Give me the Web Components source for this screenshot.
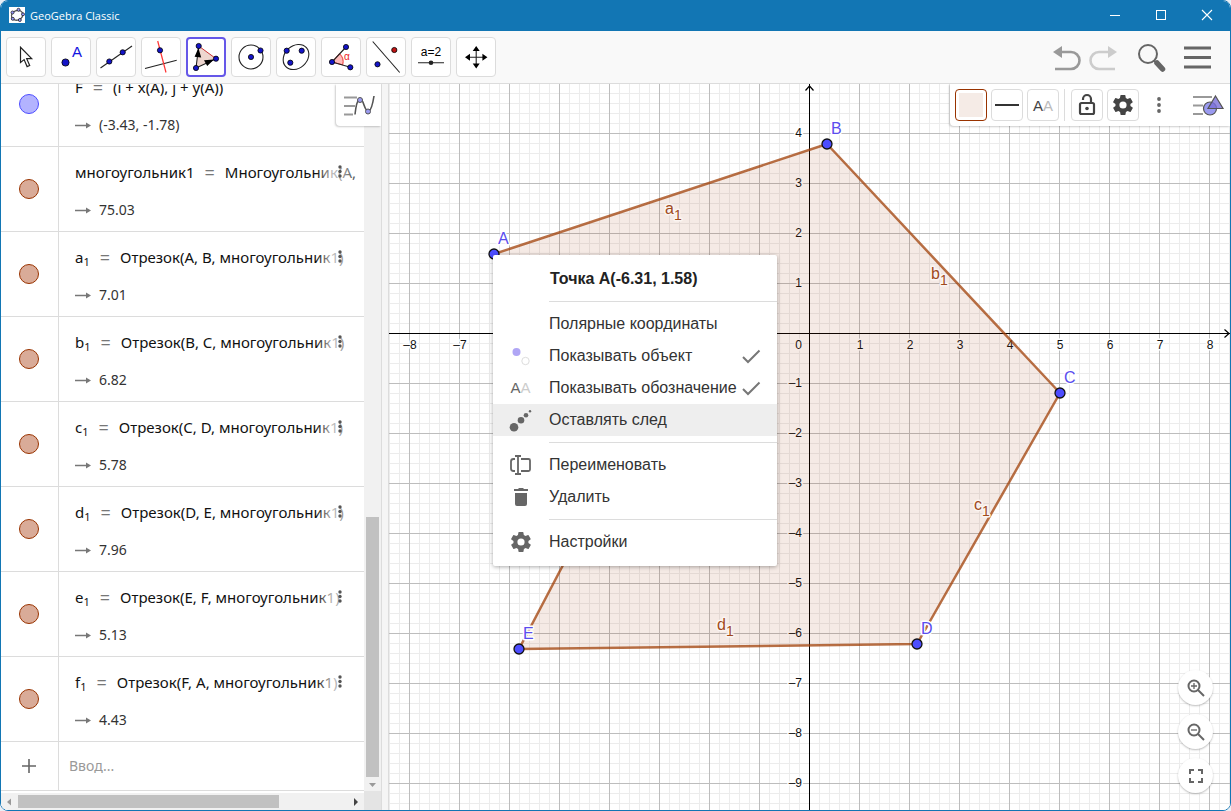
<!DOCTYPE html>
<html lang="ru">
<head>
<meta charset="utf-8">
<title>GeoGebra Classic</title>
<style>
html,body{margin:0;height:100%;background:#e9eef5;overflow:hidden}
</style>
</head>
<body>
<gg-app></gg-app>
<script>
const define = (name, html, setup) => {
  const t = document.createElement('template');
  t.innerHTML = '<style>*{box-sizing:border-box}button{font:inherit;color:inherit;border:0;background:none;padding:0;margin:0}svg{display:block}</style>' + html;
  customElements.define(name, class extends HTMLElement {
    constructor() {
      super();
      this.attachShadow({mode: 'open'}).append(t.content.cloneNode(true));
    }
    connectedCallback() { if (setup) setup(this, this.shadowRoot); }
  });
};

const GEAR = 'M19.4 13a7.500 7.500 0 0 0 0-2l2.100-1.600a.5.5 0 0 0 .1-.7l-2-3.400a.5.5 0 0 0-.6-.2l-2.500 1a7.300 7.300 0 0 0-1.700-1l-.4-2.600a.5.5 0 0 0-.5-.5h-4a.5.5 0 0 0-.5.5l-.4 2.600a7.600 7.600 0 0 0-1.700 1l-2.500-1a.5.5 0 0 0-.6.2l-2 3.400a.5.5 0 0 0 .1.700L4.500 11a7.900 7.900 0 0 0 0 2l-2.100 1.600a.5.5 0 0 0-.1.700l2 3.400c.1.2.4.3.6.2l2.500-1a7.300 7.300 0 0 0 1.700 1l.4 2.600c0 .3.2.5.5.5h4c.3 0 .5-.2.5-.5l.4-2.600a7.600 7.600 0 0 0 1.700-1l2.500 1c.2.100.5 0 .6-.2l2-3.400a.5.5 0 0 0-.1-.7zM12 15.600a3.600 3.600 0 1 1 0-7.200 3.600 3.600 0 0 1 0 7.200z';

/* Window title bar */
define('gg-titlebar', `
<style>
:host{display:flex;align-items:center;box-sizing:border-box;height:30px;padding:0 0 2px 8px;background:#1276b4;color:#fff;font:11px "Open Sans",sans-serif}
.logo{width:16px;height:16px;background:#fff;margin-right:5px}
.name{flex:1}
button{width:46px;height:28px;display:flex;align-items:center;justify-content:center}
</style>
<svg class="logo" viewBox="0 0 16 16"><ellipse cx="8" cy="8.300" rx="5.800" ry="4.800" fill="none" stroke="#555" stroke-width="1.300" transform="rotate(-20 8 8)"/><g fill="#99f" stroke="#222" stroke-width=".8"><circle cx="9.500" cy="2.800" r="1.500"/><circle cx="3.500" cy="5.500" r="1.500"/><circle cx="3.800" cy="11.800" r="1.500"/><circle cx="10.800" cy="13" r="1.500"/><circle cx="14" cy="7.300" r="1.500"/></g></svg>
<span class="name">GeoGebra Classic</span>
<button aria-label="Свернуть"><svg width="12" height="12"><path d="M1 6.500h10" stroke="#fff"/></svg></button>
<button aria-label="Развернуть"><svg width="12" height="12"><rect x="1.500" y="1.500" width="9" height="9" fill="none" stroke="#fff"/></svg></button>
<button aria-label="Закрыть"><svg width="12" height="12"><path d="M1 1l10 10M11 1L1 11" stroke="#fff" stroke-width="1.100"/></svg></button>
`);

/* One tool button */
define('gg-tool', `
<style>
:host{display:block}
button{display:block;width:40px;height:40px;background:#fff;border:1px solid #dcdcdc;border-radius:4px}
:host([active]) button{border:2px solid #6557e8}
svg{width:38px;height:38px}
:host([active]) svg{margin:-1px}
</style>
<button><svg viewBox="0 0 38 38"></svg></button>
`, (host, root) => {
  const d = (x, y, r = 2.6) => `<circle cx="${x}" cy="${y}" r="${r}" fill="#1414c8" stroke="#000" stroke-width=".8"/>`;
  const l = 'stroke="#222" stroke-width="1.100" fill="none"';
  const icons = {
    move: `<path d="M13.500 9.300v15.200l3.600-2.900 3 7 2.600-1.100-3-6.800h5z" fill="#fff" stroke="#222" stroke-width="1.200"/>`,
    point: d(13.5, 24.5, 3.6) + `<text x="20" y="19" font-family="Liberation Sans,sans-serif" font-size="15" fill="#1414e0">A</text>`,
    line: `<path d="M3.500 30L35 8" ${l}/>` + d(12.3, 23.5) + d(25.7, 14.3),
    perp: `<path d="M3 30.500L34.700 22.300" ${l}/><path d="M15.700 3L24 34.500" stroke="#f33" stroke-width="1.200"/>` + d(18, 12.3),
    poly: `<path d="M11.700 8L29 20.700 9 30z" fill="#eed6cf"/><path d="M11.700 8L29 20.700" stroke="#c33"/><path d="M9 30L11.700 8M9 30L29 20.700" ${l}/><path d="M11.400 10l2.800 9.500-6.600-.8zM27 21.500l-10 .8 3.200 5.800z"/>` + d(11.7, 8) + d(29, 20.7) + d(9, 30),
    circle: `<circle cx="19" cy="19" r="12" ${l}/>` + d(19, 19) + d(28.5, 12.5),
    conic: `<ellipse cx="19" cy="19" rx="14" ry="11.200" transform="rotate(-42 19 19)" ${l}/>` + d(9.7, 12.7) + d(24.7, 12.7) + d(13.3, 24.7),
    angle: `<path d="M10 24L17.500 15.700A11 11 0 0 1 20.700 26.800z" fill="#fbb" stroke="#e33"/><path d="M24 9L10 24 28.300 29.300" ${l}/><text x="22" y="22" font-family="Liberation Sans,sans-serif" font-size="10" fill="#e22">α</text>` + d(24, 9) + d(10, 24) + d(28.3, 29.3),
    mirror: `<path d="M5.700 3.500L32.700 34.500" ${l}/>` + d(10.5, 26.3) + `<circle cx="27.300" cy="12" r="2.600" fill="#c01414" stroke="#000" stroke-width=".8"/>`,
    slider: `<text x="19" y="18" text-anchor="middle" font-family="Liberation Sans,sans-serif" font-size="12" fill="#000">a=2</text><path d="M6 24.700h26" ${l}/><circle cx="19" cy="24.700" r="2.300" fill="#222"/>`,
    pan: `<path d="M19.200 12v14M12 19.200h14" ${l}/><path d="M19.200 8l3.500 5h-7zM19.200 30.400l3.500-5h-7zM8 19.200l5-3.500v7zM30.400 19.200l-5-3.500v7z"/>`
  };
  root.querySelector('svg').innerHTML = icons[host.getAttribute('icon')];
  root.querySelector('button').setAttribute('aria-label', host.title);
});

/* Main toolbar */
define('gg-toolbar', `
<style>
:host{display:flex;align-items:center;height:53px;padding:0 16px 0 5px;background:#f9f9f9;border-bottom:1px solid #dcdcdc}
.tools{display:flex;gap:5px;flex:1}
.right{display:flex;align-items:center}
.right button{display:flex;justify-content:center;align-items:center}
</style>
<div class="tools">
<gg-tool icon="move" title="Перемещать"></gg-tool><gg-tool icon="point" title="Точка"></gg-tool><gg-tool icon="line" title="Прямая"></gg-tool><gg-tool icon="perp" title="Перпендикулярная прямая"></gg-tool><gg-tool icon="poly" title="Многоугольник" active></gg-tool><gg-tool icon="circle" title="Окружность"></gg-tool><gg-tool icon="conic" title="Эллипс"></gg-tool><gg-tool icon="angle" title="Угол"></gg-tool><gg-tool icon="mirror" title="Отражение"></gg-tool><gg-tool icon="slider" title="Ползунок"></gg-tool><gg-tool icon="pan" title="Переместить чертёж"></gg-tool>
</div>
<div class="right">
<button aria-label="Отменить"><svg width="38" height="32"><path d="M11 11h13a8.500 8.500 0 0 1 0 17H8" fill="none" stroke="#999" stroke-width="2.600"/><path d="M6 11l9-6v12z" fill="#999"/></svg></button>
<button aria-label="Повторить"><svg width="38" height="32"><path d="M27 11H14a8.500 8.500 0 0 0 0 17h16" fill="none" stroke="#ccc" stroke-width="2.600"/><path d="M32 11l-9-6v12z" fill="#ccc"/></svg></button>
<button aria-label="Поиск"><svg width="57" height="32"><circle cx="25" cy="13" r="9" fill="none" stroke="#666" stroke-width="2"/><path d="M31 19.500l3 3" stroke="#666" stroke-width="2"/><path d="M34 22l5.500 6" stroke="#666" stroke-width="5.500" stroke-linecap="round"/></svg></button>
<button aria-label="Меню"><svg width="34" height="32"><path d="M4 7h27M4 16.500h27M4 26h27" stroke="#666" stroke-width="2.800"/></svg></button>
</div>
`);

/* One object of the algebra list */
define('gg-row', `
<style>
:host{display:flex;flex:none;height:85px;border-bottom:1px solid #dcdcdc;font-family:"Noto Sans","Open Sans",sans-serif;color:#111;--dot:#d9ab98;--ring:#993300}
:host([kind=point]){--dot:#b3b3ff;--ring:#4d4dff}
.mark{flex:none;width:58px;padding-right:2px;border-right:1px solid #dcdcdc;display:flex;justify-content:center;align-items:center}
.mark button{width:20px;height:20px;border-radius:50%;background:var(--dot);border:1px solid var(--ring)}
.body{position:relative;flex:1;min-width:0;overflow:hidden;padding:13px 0 0 16px;white-space:nowrap}
.eq{font-size:15px;line-height:24px;display:flex;gap:10px}
.val{font-size:14px;line-height:24px;margin-top:14px;display:flex;align-items:center;gap:8px;color:#333}
.fade{position:absolute;top:0;right:0;width:48px;height:50px;background:linear-gradient(90deg,#fff0,#fffb 35%,#fff8 60%,#fff0)}
.more{position:absolute;top:17px;right:20px;width:8px;height:16px}
:host([kind=point]) .fade,:host([kind=point]) .more{display:none}
::slotted(sub){font-size:11px;line-height:0;vertical-align:-3px}
.eqs{color:#777;font-size:18px}
</style>
<div class="mark"><button aria-label="Показывать объект"></button></div>
<div class="body">
<div class="eq"><span><slot name="name"></slot><slot name="index"></slot></span><span class="eqs">=</span><span><slot></slot></span></div>
<div class="val"><svg width="16" height="10"><path d="M0 5.500h13" stroke="#777" stroke-width="1.500"/><path d="M16 5.500l-5-3v6z" fill="#777"/></svg><slot name="value"></slot></div>
<div class="fade"></div>
<button class="more" aria-label="Ещё"><svg width="8" height="16" fill="#555"><circle cx="4" cy="3" r="1.700"/><circle cx="4" cy="7.500" r="1.700"/><circle cx="4" cy="12" r="1.700"/></svg></button>
</div>
`);

/* Algebra panel with its scroll bars */
define('gg-algebra', `
<style>
:host{position:relative;display:grid;grid-template:minmax(0,1fr) 19px / minmax(0,1fr) 17px;flex:none;width:381px;background:#fff;border-right:1px solid #dcdcdc;font-family:"Noto Sans",sans-serif}
.list{display:flex;flex-direction:column;justify-content:flex-end;overflow:hidden;min-height:0}
.new{display:flex;flex:none;height:49px;border-bottom:1px solid #dcdcdc}
.plus{flex:none;width:58px;padding-right:2px;border-right:1px solid #dcdcdc;display:flex;align-items:center;justify-content:center}
input{flex:1;min-width:0;border:0;outline:0;background:none;padding:0 10px 2px;font:14px "Noto Sans",sans-serif}
input::placeholder{color:#999}
.v{background:#f1f1f1;display:flex;flex-direction:column;align-items:center;justify-content:flex-end}
.v .thumb{width:13px;height:260px;background:#c1c1c1}
.h{background:#f1f1f1;display:flex;align-items:center;border-top:2px solid #fff}
.h .thumb{width:261px;height:13px;background:#c1c1c1}
.h .gap{flex:1}
.corner{background:#e4e4e4}
.toggle{position:absolute;top:0;right:0;width:45px;height:42px;background:#fff;border-bottom-left-radius:4px;box-shadow:-1px 1px 2px #0003;display:flex;align-items:center;justify-content:center}
</style>
<div class="list">
<gg-row kind="point"><span slot="name">F</span>(i + x(A), j + y(A))<span slot="value">(-3.43, -1.78)</span></gg-row>
<gg-row><span slot="name">многоугольник1</span>Многоугольник(A,<span slot="value">75.03</span></gg-row>
<gg-row><span slot="name">a</span><sub slot="index">1</sub>Отрезок(A, B, многоугольник1)<span slot="value">7.01</span></gg-row>
<gg-row><span slot="name">b</span><sub slot="index">1</sub>Отрезок(B, C, многоугольник1)<span slot="value">6.82</span></gg-row>
<gg-row><span slot="name">c</span><sub slot="index">1</sub>Отрезок(C, D, многоугольник1)<span slot="value">5.78</span></gg-row>
<gg-row><span slot="name">d</span><sub slot="index">1</sub>Отрезок(D, E, многоугольник1)<span slot="value">7.96</span></gg-row>
<gg-row><span slot="name">e</span><sub slot="index">1</sub>Отрезок(E, F, многоугольник1)<span slot="value">5.13</span></gg-row>
<gg-row><span slot="name">f</span><sub slot="index">1</sub>Отрезок(F, A, многоугольник1)<span slot="value">4.43</span></gg-row>
<div class="new"><button class="plus" aria-label="Добавить"><svg width="14" height="14"><path d="M7 0v14M0 7h14" stroke="#666" stroke-width="1.600"/></svg></button><input aria-label="Ввод" placeholder="Ввод..."></div>
</div>
<div class="v"><div class="thumb"></div><svg width="17" height="14"><path d="M5 6h7l-3.500 4z" fill="#999"/></svg></div>
<div class="h"><svg width="17" height="14"><path d="M10 3.500v7l-4-3.500z" fill="#999"/></svg><div class="thumb"></div><div class="gap"></div><svg width="17" height="14"><path d="M7 3v8l4-4z" fill="#444"/></svg></div>
<div class="corner"></div>
<button class="toggle" aria-label="Настройки панели"><svg width="32" height="24"><path d="M1 4.500h13M1 13h11M1 21.500h9" stroke="#999" stroke-width="2"/><path d="M12 21.500C14 3 18 3 21 12s7 10 10-9" fill="none" stroke="#555" stroke-width="1.600"/><g fill="#9a9af0" stroke="#555"><circle cx="17" cy="7" r="2.500"/><circle cx="25" cy="18.500" r="2.500"/></g></svg></button>
`);

/* Coordinate plane with the polygon */
define('gg-plane', `
<style>
:host{display:block;height:100%}
svg{width:100%;height:100%;font-family:"Liberation Sans",sans-serif}
text{paint-order:stroke;stroke:#fff;stroke-width:3px;stroke-linejoin:round}
.axis{font-size:12px;fill:#111}
.pt{font-size:16px;fill:#5a4dee}
.seg{font-size:16px;fill:#a04a1c;stroke:#fbf5f2}
.sub{font-size:14px}
</style>
<svg role="img" aria-label="Полотно">
<defs>
<pattern id="minor" x="420" y="249" width="10" height="10" patternUnits="userSpaceOnUse"><path d="M0 0h1v10h-1zM0 0h10v1h-10z" fill="#ececec"/></pattern>
<pattern id="major" x="420" y="249" width="50" height="50" patternUnits="userSpaceOnUse"><path d="M0 0h1v50h-1zM0 0h50v1h-50z" fill="#bdbdbd"/></pattern>
</defs>
<rect width="100%" height="100%" fill="#fff"/>
<rect width="100%" height="100%" fill="url(#minor)"/>
<rect width="100%" height="100%" fill="url(#major)"/>
<rect y="249" width="100%" height="1"/>
<rect x="420" width="1" height="100%"/>
<path d="M416.500 6.500l4-4.500 4 4.500" fill="none" stroke="#000" stroke-width="1.200"/>
<svg x="100%" y="249" style="overflow:visible;width:1px;height:1px"><path d="M-5.500-3.500l4.500 4-4.500 4" fill="none" stroke="#000" stroke-width="1.200"/></svg>
<g class="axis" id="labels"></g>
<path d="M105 170L438 60 671 309 528 560 130 565 249 338z" fill="#993300" fill-opacity=".1" stroke="#a04008" stroke-opacity=".75" stroke-width="2.500" stroke-linejoin="round"/>
<g id="objects"></g>
</svg>
`, (host, root) => {
  let s = '';
  for (const n of [-8, -7, 1, 2, 3, 4, 5, 6, 7, 8]) s += `<text x="${421 + n * 50}" y="265" text-anchor="middle">${n < 0 ? '–' : ''}${Math.abs(n)}</text>`;
  for (let n = 4; n >= -9; n--) if (n) s += `<text x="413" y="${253 - n * 50}" text-anchor="end">${n < 0 ? '–' : ''}${Math.abs(n)}</text>`;
  s += '<text x="413" y="265" text-anchor="end">0</text>';
  root.getElementById('labels').innerHTML = s;
  const pts = [['A', 105, 170], ['B', 438, 60], ['C', 671, 309], ['D', 528, 560], ['E', 130, 565]];
  const segs = [['a', 276, 130], ['b', 542, 195], ['c', 585, 426], ['d', 328, 546]];
  root.getElementById('objects').innerHTML =
    segs.map(([n, x, y]) => `<text class="seg" x="${x}" y="${y}">${n}<tspan class="sub" dy="6">1</tspan></text>`).join('') +
    pts.map(([n, x, y]) => `<text class="pt" x="${x + 4}" y="${y - 10}">${n}</text><circle cx="${x}" cy="${y}" r="5" fill="#4d4dff" stroke="#111" stroke-width="1.300"/>`).join('');
});

/* Style bar of the graphics view */
define('gg-stylebar', `
<style>
:host{display:flex;align-items:center;gap:4px;height:42px;padding:0 4px 0 5px;background:#fff;border-bottom-left-radius:4px;box-shadow:-1px 1px 2px #0003}
.b{width:32px;height:32px;border:1px solid #dcdcdc;border-radius:4px;display:flex;align-items:center;justify-content:center}
.fill{border-color:#993300}
.fill span{width:24px;height:24px;background:#f5ebe6}
.aa{font:15px "Liberation Sans",sans-serif;color:#444}
.aa i{font-style:normal;color:#bbb}
.sep{width:1px;height:32px;margin:0 2px 0 1px;background:#dcdcdc}
.more{width:32px;display:flex;justify-content:center}
.last{margin-left:13px}
</style>
<button class="b fill" aria-label="Цвет"><span></span></button>
<button class="b" aria-label="Линия"><svg width="24" height="4"><path d="M0 2h24" stroke="#333" stroke-width="2"/></svg></button>
<button class="b aa" aria-label="Обозначение">A<i>A</i></button>
<span class="sep"></span>
<button class="b" aria-label="Закрепить"><svg width="24" height="24" fill="none" stroke="#444" stroke-width="2.200"><rect x="5" y="10" width="14" height="11" rx="1.500"/><path d="M8 7V6a4 4 0 0 1 8 0v4"/><circle cx="12" cy="15.500" r="1.800" fill="#444" stroke="none"/></svg></button>
<button class="b" aria-label="Настройки"><svg width="24" height="24"><path d="${GEAR}" fill="#444"/></svg></button>
<button class="more" aria-label="Ещё"><svg width="6" height="18" fill="#666"><circle cx="3" cy="3" r="1.900"/><circle cx="3" cy="9" r="1.900"/><circle cx="3" cy="15" r="1.900"/></svg></button>
<button class="last" aria-label="Панель стиля"><svg width="34" height="24"><path d="M1 4h19M1 12.500h10M1 21h10" stroke="#999" stroke-width="2"/><circle cx="18" cy="15.500" r="6.500" fill="#9a9af0" stroke="#555" stroke-width="1.200"/><path d="M23.500 3l7.500 12.500H16z" fill="#7a6fd8" fill-opacity=".8" stroke="#555" stroke-width="1.200"/></svg></button>
`);

/* Context menu entry */
define('gg-menuitem', `
<style>
:host{display:block}
button{display:flex;align-items:center;width:100%;height:32px;padding-left:16px;text-align:left;font:16px "Liberation Sans",sans-serif;color:#333}
:host([hover]) button{background:#eee}
.ic{flex:none;width:24px;height:24px;margin-right:16px}
.check{display:none;flex:none;margin-left:auto;margin-right:16px}
:host([checked]) .check{display:block}
span{white-space:nowrap}
</style>
<button role="menuitem"><svg class="ic" viewBox="0 0 24 24" fill="#666"></svg><span><slot></slot></span><svg class="check" width="20" height="20"><path d="M2 11l5 5L18.500 4.500" fill="none" stroke="#777" stroke-width="2"/></svg></button>
`, (host, root) => {
  const icons = {
    show: '<circle cx="7.500" cy="8" r="4" fill="#b0a6f5"/><circle cx="16.500" cy="17" r="3.700" fill="#fff" stroke="#ddd"/>',
    label: '<text x="1.500" y="17" font-family="Liberation Sans,sans-serif" font-size="15" fill="#666">A<tspan fill="#ccc">A</tspan></text>',
    trace: '<circle cx="5" cy="19.300" r="4.300"/><circle cx="12" cy="12.300" r="3.300"/><circle cx="17" cy="7.300" r="2.300"/><circle cx="21" cy="3.300" r="1.200"/>',
    rename: '<path d="M6 6H4.500A2.500 2.500 0 0 0 2 8.500v7A2.500 2.500 0 0 0 4.500 18H6M12 6h7.500A1.500 1.500 0 0 1 21 7.500v9a1.500 1.500 0 0 1-1.500 1.500H12M6 3h6M9 3v18M6 21h6" fill="none" stroke="#666" stroke-width="1.800"/>',
    trash: '<path d="M6 8h12v11a2 2 0 0 1-2 2H8a2 2 0 0 1-2-2zM5 4h4l1-1h4l1 1h4v2H5z"/>',
    gear: `<path d="${GEAR}"/>`
  };
  root.querySelector('.ic').innerHTML = icons[host.getAttribute('icon')] || '';
});

define('gg-contextmenu', `
<style>
:host{display:block;width:284px;padding:8px 0;background:#fff;border-radius:2px;box-shadow:0 1px 4px #0005}
h2{margin:0;padding-left:57px;font:bold 16px/32px "Liberation Sans",sans-serif;color:#222}
hr{margin:6px 0 6px 56px;border:0;height:1px;background:#dcdcdc}
</style>
<h2>Точка A(-6.31, 1.58)</h2>
<hr>
<gg-menuitem>Полярные координаты</gg-menuitem>
<gg-menuitem icon="show" checked>Показывать объект</gg-menuitem>
<gg-menuitem icon="label" checked>Показывать обозначение</gg-menuitem>
<gg-menuitem icon="trace" hover>Оставлять след</gg-menuitem>
<hr>
<gg-menuitem icon="rename">Переименовать</gg-menuitem>
<gg-menuitem icon="trash">Удалить</gg-menuitem>
<hr>
<gg-menuitem icon="gear">Настройки</gg-menuitem>
`);

define('gg-zoombuttons', `
<style>
:host{display:flex;flex-direction:column;gap:9px}
button{width:35px;height:35px;border-radius:50%;background:#fff;box-shadow:0 1px 2px #0004;display:flex;align-items:center;justify-content:center}
svg{fill:none;stroke:#666;stroke-width:2}
</style>
<button aria-label="Увеличить"><svg width="24" height="24"><circle cx="10" cy="10" r="5.500"/><path d="M14 14l6 6"/><path d="M7 10h6M10 7v6" stroke-width="1.300"/></svg></button>
<button aria-label="Уменьшить"><svg width="24" height="24"><circle cx="10" cy="10" r="5.500"/><path d="M14 14l6 6"/><path d="M7 10h6" stroke-width="1.300"/></svg></button>
<button aria-label="Во весь экран"><svg width="24" height="24"><path d="M6 10V6h4M14 6h4v4M18 14v4h-4M10 18H6v-4"/></svg></button>
`);

define('gg-graphics', `
<style>
:host{display:block;position:relative;flex:1;min-width:0;overflow:hidden}
gg-stylebar{position:absolute;top:0;right:0}
gg-zoombuttons{position:absolute;right:17px;bottom:17px}
gg-contextmenu{position:absolute;left:104px;top:171px}
</style>
<gg-plane></gg-plane><gg-stylebar></gg-stylebar><gg-zoombuttons></gg-zoombuttons><gg-contextmenu></gg-contextmenu>
`);

define('gg-app', `
<style>
:host{display:flex;flex-direction:column;height:100vh;box-sizing:border-box;border:1px solid #1276b4;border-radius:8px;overflow:hidden;background:#fff}
main{flex:1;display:flex;min-height:0}
.split{flex:none;width:7px;background:#f5f5f5;border-right:1px solid #dcdcdc}
gg-titlebar,gg-toolbar{flex:none}
</style>
<gg-titlebar></gg-titlebar><gg-toolbar></gg-toolbar>
<main><gg-algebra></gg-algebra><div class="split"></div><gg-graphics></gg-graphics></main>
`);
</script>
</body>
</html>
